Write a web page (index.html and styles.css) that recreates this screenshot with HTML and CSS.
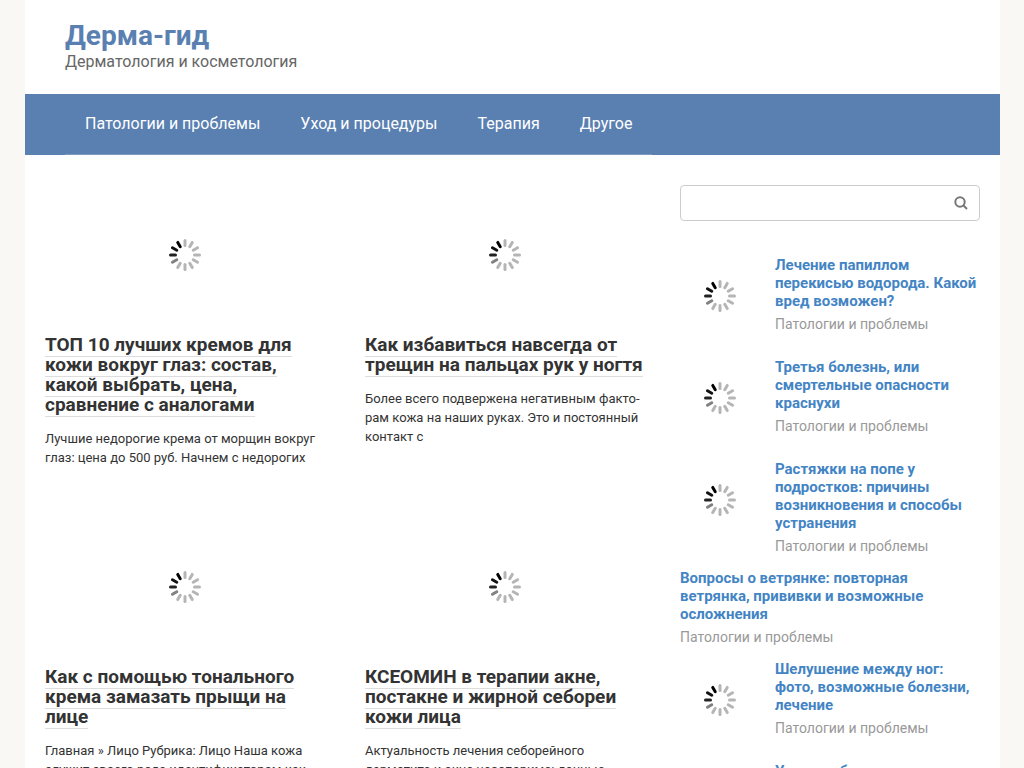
FILE: index.html
```html
<!DOCTYPE html>
<html lang="ru">
<head>
<meta charset="utf-8">
<meta name="viewport" content="width=device-width, initial-scale=1">
<title>Дерма-гид</title>
<link rel="stylesheet" href="styles.css">
</head>
<body>
<svg class="defs" aria-hidden="true">
  <symbol id="spinner" viewBox="-16 -16 32 32">
    <g fill="none" stroke="#b5b5b5" stroke-width="3" stroke-linecap="round">
      <path id="spoke" d="M0-14.500V-9.500"/>
      <use href="#spoke" transform="rotate(30)"/>
      <use href="#spoke" transform="rotate(60)"/>
      <use href="#spoke" transform="rotate(90)"/>
      <use href="#spoke" transform="rotate(120)"/>
      <use href="#spoke" transform="rotate(150)"/>
      <use href="#spoke" transform="rotate(180)"/>
      <use href="#spoke" transform="rotate(210)"/>
    </g>
    <g fill="none" stroke-width="3" stroke-linecap="round">
      <path d="M0-14.500V-9.500" stroke="#808080" transform="rotate(240)"/>
      <path d="M0-14.500V-9.500" stroke="#222" transform="rotate(270)"/>
      <path d="M0-14.500V-9.500" stroke="#111" transform="rotate(300)"/>
      <path d="M0-14.500V-9.500" stroke="#000" transform="rotate(330)"/>
    </g>
  </symbol>
</svg>
<div class="page">
  <header class="header">
    <a class="site-title" href="#">Дерма-гид</a>
    <p class="site-description">Дерматология и косметология</p>
  </header>
  <nav class="nav">
    <ul class="menu">
      <li><a href="#">Патологии и проблемы</a></li>
      <li><a href="#">Уход и процедуры</a></li>
      <li><a href="#">Терапия</a></li>
      <li><a href="#">Другое</a></li>
    </ul>
  </nav>
  <div class="content">
    <main class="posts">
      <article>
        <div class="post-image"><svg class="spinner"><use href="#spinner"/></svg></div>
        <h2 class="post-title"><a href="#">ТОП 10 лучших кремов для кожи вокруг глаз: состав, какой выбрать, цена, сравнение с аналогами</a></h2>
        <p class="post-text">Лучшие недорогие крема от морщин вокруг глаз: цена до 500 руб. Начнем с недорогих</p>
      </article>
      <article>
        <div class="post-image"><svg class="spinner"><use href="#spinner"/></svg></div>
        <h2 class="post-title"><a href="#">Как избавиться навсегда от трещин на пальцах рук у ногтя</a></h2>
        <p class="post-text">Более всего подвержена негативным факто&shy;рам кожа на наших руках. Это и постоянный контакт с</p>
      </article>
      <article>
        <div class="post-image"><svg class="spinner"><use href="#spinner"/></svg></div>
        <h2 class="post-title"><a href="#">Как с помощью тонального крема замазать прыщи на лице</a></h2>
        <p class="post-text">Главная » Лицо Рубрика: Лицо Наша кожа служит своего рода идентификатором как</p>
      </article>
      <article>
        <div class="post-image"><svg class="spinner"><use href="#spinner"/></svg></div>
        <h2 class="post-title"><a href="#">КСЕОМИН в терапии акне, постакне и жирной себореи кожи лица</a></h2>
        <p class="post-text">Актуальность лечения себорейного дерматита и акне неоспорима: данные</p>
      </article>
    </main>
    <aside class="sidebar">
      <form class="search">
        <input type="search" aria-label="Поиск">
        <button type="submit" aria-label="Найти"><svg viewBox="0 0 14 14"><circle cx="6" cy="6" r="4.700"/><path d="M9.500 9.500L13 13"/></svg></button>
      </form>
      <article class="item">
        <div class="thumb"><svg class="spinner"><use href="#spinner"/></svg></div>
        <div class="item-body"><a href="#">Лечение папиллом перекисью водорода. Какой вред возможен?</a><p>Патологии и проблемы</p></div>
      </article>
      <article class="item">
        <div class="thumb"><svg class="spinner"><use href="#spinner"/></svg></div>
        <div class="item-body"><a href="#">Третья болезнь, или смертельные опасности краснухи</a><p>Патологии и проблемы</p></div>
      </article>
      <article class="item">
        <div class="thumb"><svg class="spinner"><use href="#spinner"/></svg></div>
        <div class="item-body"><a href="#">Растяжки на попе у подростков: причины возникновения и способы устранения</a><p>Патологии и проблемы</p></div>
      </article>
      <article class="item">
        <div class="item-body"><a href="#">Вопросы о ветрянке: повторная ветрянка, прививки и возможные осложнения</a><p>Патологии и проблемы</p></div>
      </article>
      <article class="item">
        <div class="thumb"><svg class="spinner"><use href="#spinner"/></svg></div>
        <div class="item-body"><a href="#">Шелушение между ног: фото, возможные болезни, лечение</a><p>Патологии и проблемы</p></div>
      </article>
      <article class="item">
        <div class="thumb"><svg class="spinner"><use href="#spinner"/></svg></div>
        <div class="item-body"><a href="#">Угри на лбу</a></div>
      </article>
    </aside>
  </div>
</div>
</body>
</html>
```
FILE: styles.css
```css
* {
  box-sizing: border-box;
}

body {
  margin: 0;
  padding: 0 24px 0 25px;
  background: #f9f8f5;
  color: #333;
  font-family: Roboto, "Liberation Sans", sans-serif;
}

a {
  color: inherit;
  text-decoration: none;
}

p,
h2 {
  margin: 0;
}

.defs {
  position: absolute;
  width: 0;
  height: 0;
}

.page {
  background: #fff;
}

.header {
  padding: 20px 40px 22px;
}

.site-title {
  display: block;
  color: #5a80b1;
  font-size: 28px;
  font-weight: 700;
  line-height: 32px;
}

.site-description {
  color: #666;
  font-size: 16px;
  line-height: 20px;
}

.nav {
  display: flex;
  padding: 0 40px;
  background: #5a80b1;
}

.menu {
  display: flex;
  margin: 0;
  padding: 0;
  border-bottom: 1px solid #7b99c1;
  list-style: none;
}

.menu a {
  display: block;
  padding: 20px;
  color: #fff;
  font-size: 16px;
  font-weight: 400;
  line-height: 20px;
}

.content {
  display: grid;
  grid-template-columns: minmax(0, 1fr) 300px;
  gap: 35px;
  padding: 30px 20px;
}

.posts {
  display: grid;
  grid-template-columns: repeat(2, minmax(0, 1fr));
  align-content: start;
  gap: 50px 40px;
}

.post-image {
  display: flex;
  align-items: center;
  justify-content: center;
  height: 140px;
  margin-bottom: 10px;
}

.spinner {
  width: 32px;
  height: 32px;
}

.post-title {
  margin-bottom: 14px;
  font-size: 19px;
  font-weight: 700;
  line-height: 20px;
}

.post-title a {
  border-bottom: 1px solid #ddd;
}

.post-text {
  font-size: 13px;
  line-height: 19px;
}

.search {
  display: flex;
  height: 36px;
  margin-bottom: 35px;
  border: 1px solid #ccc;
  border-radius: 4px;
}

.search input {
  flex: 1;
  min-width: 0;
  padding: 0 12px;
  border: 0;
  outline: 0;
  background: none;
  font: inherit;
}

.search button {
  display: flex;
  align-items: center;
  justify-content: center;
  width: 36px;
  padding: 0;
  border: 0;
  background: none;
}

.search svg {
  width: 14px;
  height: 14px;
  fill: none;
  stroke: #777;
  stroke-width: 2;
}

.item {
  display: flex;
  align-items: flex-start;
  gap: 15px;
  margin-bottom: 14px;
}

.thumb {
  display: flex;
  flex: none;
  align-items: center;
  justify-content: center;
  width: 80px;
  height: 80px;
  margin-bottom: 8px;
}

.item-body {
  color: #4384c4;
  font-size: 15px;
  font-weight: 700;
  line-height: 18px;
}

.item-body a {
  display: block;
}

.item-body p {
  margin-top: 5px;
  color: #999;
  font-size: 14px;
  font-weight: 400;
}
```
